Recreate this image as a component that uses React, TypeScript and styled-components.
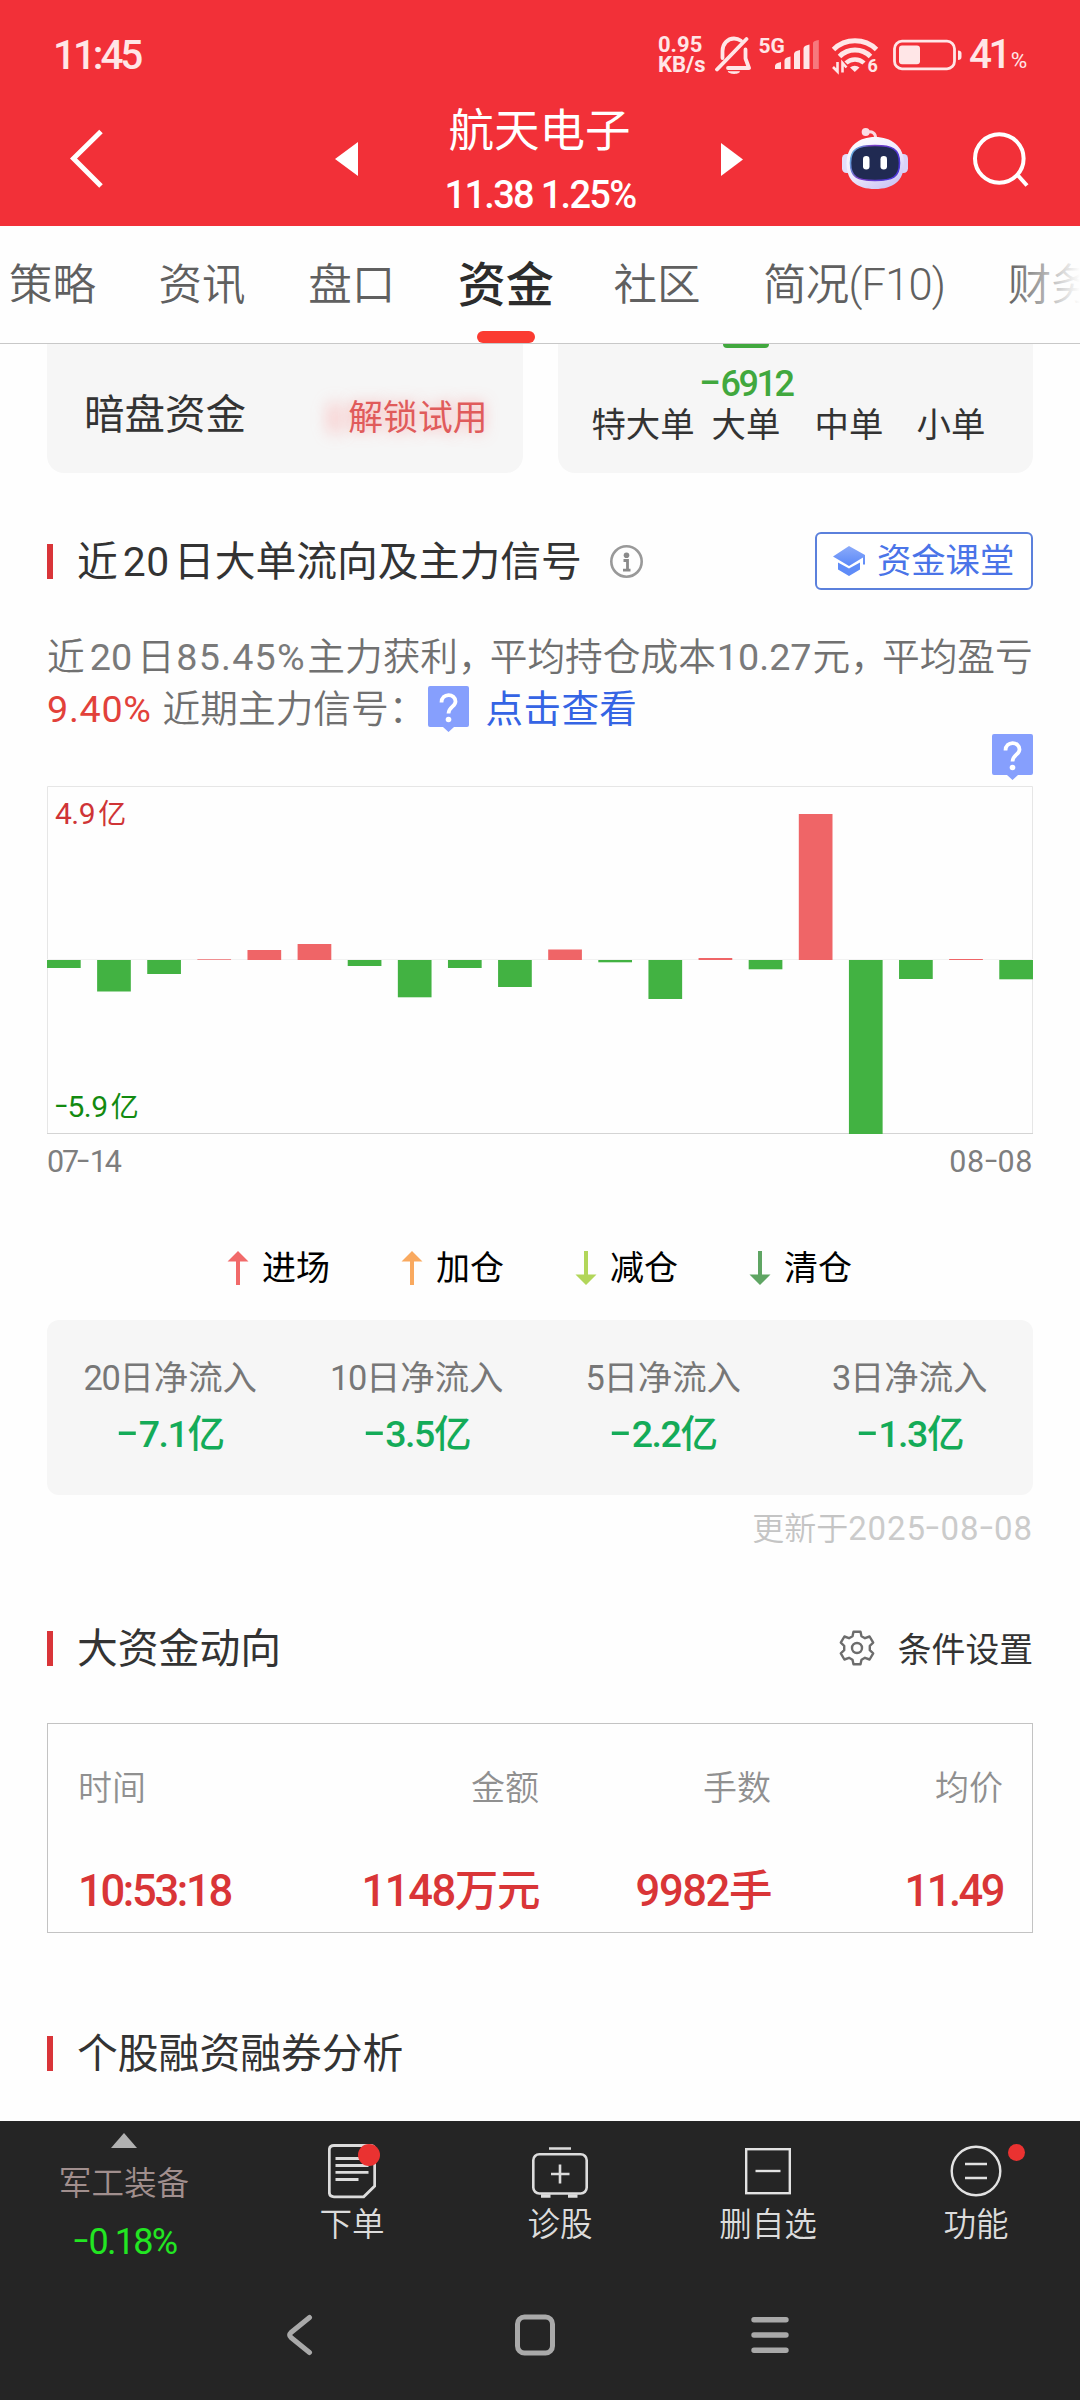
import React from 'react';
import styled, { createGlobalStyle } from 'styled-components';

const GlobalStyle = createGlobalStyle`
  *, *::before, *::after { box-sizing: border-box; }
  body {
    margin: 0;
    background: #fefefe;
    font-family: Roboto, "Noto Sans CJK SC", sans-serif;
    color: #333;
  }
  svg { display: block; flex: none; }
`;

const Page = styled.div`
  width: 1080px;
  height: 2400px;
  display: flex;
  flex-direction: column;
  overflow: hidden;
  white-space: nowrap;
`;

/* A long dash raised to the middle of the figures. */
const Dash = styled.span<{ $wide?: boolean }>`
  display: inline-block;
  margin: 0 ${p => (p.$wide ? 0.12 : 0.07)}em;
  letter-spacing: 0;
  transform: translateY(-0.065em) scaleX(${p => (p.$wide ? 1.75 : 1.45)});
`;

const Figures = ({ children, wide }: { children: string; wide?: boolean }) => (
  <>
    {children.split(/(-)/).map((part, i) =>
      part === '-' ? <Dash key={i} $wide={wide}>-</Dash> : part,
    )}
  </>
);

/* ---------- header ---------- */

const Header = styled.header`
  height: 226px;
  flex: none;
  background: #f23038;
  color: #fff;
`;

const StatusBar = styled.div`
  height: 101px;
  padding: 9px 53px 0 53px;
  display: flex;
  align-items: center;
  color: #ffe6e7;
`;

const Clock = styled.div`
  flex: 1;
  font-size: 40.5px;
  font-weight: 500;
  line-height: 46px;
  letter-spacing: -3.1px;
`;

const NetSpeed = styled.div`
  width: 48px;
  font-size: 22px;
  font-weight: 700;
  line-height: 20px;
`;

const StatusIcon = styled.div<{ $gap: number }>`
  margin-left: ${p => p.$gap}px;
`;

const BatteryText = styled.div`
  width: 58px;
  margin-left: 7px;
  padding-top: 3px;
  display: flex;
  align-items: baseline;
  font-size: 40.5px;
  font-weight: 500;
  line-height: 46px;
  letter-spacing: -3.6px;
  small {
    margin-left: 3px;
    font-size: 22.5px;
    font-weight: 400;
  }
`;

const TitleBar = styled.div`
  height: 125px;
  padding-left: 70px;
  display: flex;
  align-items: flex-start;
`;

const BarIcon = styled.div<{ $gap?: number }>`
  height: 116px;
  margin-left: ${p => p.$gap ?? 0}px;
  display: flex;
  align-items: center;
`;

const StockTitle = styled.div`
  width: 363px;
  padding-top: 3px;
  display: flex;
  flex-direction: column;
  align-items: center;
  gap: 15px;
`;

const StockName = styled.div`
  font-size: 45.5px;
  line-height: 56px;
`;

const StockQuote = styled.div`
  padding-left: 1px;
  font-size: 38px;
  font-weight: 500;
  line-height: 40px;
  letter-spacing: -1.7px;
`;

/* ---------- tabs ---------- */

const Tabs = styled.nav`
  height: 118px;
  flex: none;
  padding-left: 9px;
  display: flex;
  align-items: stretch;
  gap: 62.6px;
  border-bottom: 1px solid #c8c8c8;
  background: #fefefe;
  overflow: hidden;
  position: relative;
  &::after {
    content: '';
    position: absolute;
    right: 0;
    top: 0;
    width: 72px;
    height: 100%;
    background: linear-gradient(90deg, rgba(254, 254, 254, 0), #fefefe);
  }
`;

const Tab = styled.div<{ $active?: boolean }>`
  flex: none;
  margin-right: ${p => (p.$active ? -3 : 0)}px;
  display: flex;
  flex-direction: column;
  align-items: center;
  font-size: ${p => (p.$active ? 48 : 43.5)}px;
  font-weight: ${p => (p.$active ? 500 : 350)};
  color: ${p => (p.$active ? '#2c2c2c' : '#606060')};
  line-height: 119px;
  span { letter-spacing: -0.8px; }
  ${p =>
    p.$active &&
    `
    &::after {
      content: '';
      width: 58px;
      height: 12px;
      margin-top: -14px;
      border-radius: 6px;
      background: #fb3b31;
    }`}
`;

/* ---------- content ---------- */

const Main = styled.main`
  flex: 1;
  min-height: 0;
  padding: 0 47px;
  overflow: hidden;
`;

const CardRow = styled.div`
  display: grid;
  grid-template-columns: 1fr 1fr;
  grid-template-rows: 129px;
  gap: 35px;
`;

const Card = styled.div`
  background: #f6f6f6;
  border-radius: 0 0 17px 17px;
`;

const DarkPoolCard = styled(Card)`
  padding: 13px 35px 0 37px;
  display: flex;
  align-items: flex-start;
  justify-content: space-between;
`;

const DarkPoolLabel = styled.div`
  font-size: 40.5px;
  line-height: 116px;
`;

const Unlock = styled.div`
  position: relative;
  font-size: 34.8px;
  line-height: 122px;
  color: #e05b5b;
  text-shadow: 0 0 14px rgba(255, 110, 110, 0.55);
  &::before {
    content: '';
    position: absolute;
    left: -20px;
    top: 45px;
    width: 14px;
    height: 32px;
    border-radius: 7px;
    background: rgba(255, 130, 130, 0.36);
    filter: blur(8px);
  }
`;

const OrderCard = styled(Card)`
  padding-left: 34px;
  display: grid;
  grid-template-columns: 103px 103px 103px 101px;
  justify-items: center;
`;

const OrderColumn = styled.div`
  display: flex;
  flex-direction: column;
  align-items: center;
`;

const OrderBar = styled.div`
  width: 46px;
  height: 4px;
  border-radius: 0 0 6px 6px;
  background: #41a83e;
`;

const OrderValue = styled.div`
  height: 57px;
  font-size: 36px;
  font-weight: 500;
  line-height: 72px;
  letter-spacing: -2.5px;
  color: #41a83e;
`;

const OrderSpacer = styled.div`
  height: 61px;
`;

const OrderLabel = styled.div`
  font-size: 34.4px;
  line-height: 40px;
`;

const SectionHead = styled.div<{ $top: number }>`
  height: 60px;
  margin-top: ${p => p.$top}px;
  display: flex;
  align-items: center;
`;

const Mark = styled.div`
  width: 6px;
  height: 35px;
  margin-right: 24px;
  background: #d93539;
`;

const SectionTitle = styled.h2`
  margin: 0;
  padding-top: 1px;
  font-size: 40.8px;
  font-weight: 400;
  line-height: 60px;
  span {
    margin: 0 4px 0 5px;
    letter-spacing: 0.6px;
  }
`;

const InfoSlot = styled.div`
  margin-left: 28px;
  flex: 1;
`;

const ClassButton = styled.button`
  width: 218px;
  height: 58px;
  padding: 0 0 0 16px;
  display: flex;
  align-items: center;
  gap: 11px;
  border: 2px solid #5b80dc;
  border-radius: 6px;
  background: #fff;
  color: #4a74e8;
  font: 400 34.3px/54px Roboto, "Noto Sans CJK SC", sans-serif;
`;

const Summary = styled.div`
  margin-top: 41px;
  font-size: 37.7px;
  font-weight: 350;
  line-height: 51px;
  color: #707070;
`;

const Amount = styled.span<{ $side: number; $spacing?: number }>`
  margin: 0 ${p => p.$side}px;
  font-weight: 400;
  letter-spacing: ${p => p.$spacing ?? 0}px;
  color: #7a7a7a;
`;

const Comma = styled.span`
  letter-spacing: -6px;
`;

const SignalLine = styled.div`
  display: flex;
  align-items: center;
  height: 51px;
`;

const Profit = styled.span`
  margin-right: 11px;
  padding-top: 1px;
  font-weight: 400;
  letter-spacing: 0.7px;
  color: #e2413a;
`;

const SignalLabel = styled.span`
  width: 265px;
  padding-top: 1px;
`;

const ViewLink = styled.a`
  margin-left: 17px;
  padding-top: 1px;
  font-size: 37.5px;
  font-weight: 400;
  letter-spacing: 0.4px;
  color: #3564e4;
`;

const TagRow = styled.div`
  height: 52px;
  display: flex;
  justify-content: flex-end;
`;

const ChartFrame = styled.div`
  position: relative;
`;

const AxisLabel = styled.div<{ $low?: boolean }>`
  position: absolute;
  left: 8px;
  top: ${p => (p.$low ? 303 : 10)}px;
  font-size: 30px;
  line-height: 36px;
  letter-spacing: -0.5px;
  color: ${p => (p.$low ? '#128a10' : '#cf3436')};
  small {
    margin-left: 3px;
    font-size: 28px;
  }
`;

const DateRow = styled.div`
  margin-top: 10px;
  display: flex;
  justify-content: space-between;
  font-size: 30.5px;
  line-height: 36px;
  color: #7e7e7e;
`;

const DateLabel = styled.span<{ $spacing: number }>`
  letter-spacing: ${p => p.$spacing}px;
`;

const Legend = styled.div`
  height: 40px;
  margin-top: 68px;
  padding-left: 180px;
  display: grid;
  grid-template-columns: repeat(4, 174px);
`;

const LegendItem = styled.div`
  display: flex;
  align-items: center;
  gap: 13px;
  font-size: 34px;
  line-height: 40px;
  color: #000;
`;

const FlowCard = styled.div`
  height: 175px;
  margin-top: 32px;
  padding-top: 35px;
  display: grid;
  grid-template-columns: repeat(4, 1fr);
  background: #f6f6f6;
  border-radius: 12px;
  text-align: center;
`;

const FlowLabel = styled.div`
  font-size: 34.4px;
  line-height: 46px;
  color: #777;
  span { letter-spacing: -1.4px; }
`;

const FlowValue = styled.div`
  margin-top: 5px;
  font-size: 37.5px;
  font-weight: 500;
  line-height: 56px;
  letter-spacing: -1.4px;
  color: #14ab58;
`;

const Updated = styled.div`
  margin-top: 14px;
  font-size: 32px;
  font-weight: 350;
  line-height: 40px;
  text-align: right;
  color: #c4c4c4;
  span {
    font-size: 33px;
    font-weight: 400;
    letter-spacing: 0.9px;
    color: #cbcbcb;
  }
`;

const SettingLink = styled.div`
  margin-left: auto;
  display: flex;
  align-items: center;
  gap: 23px;
  padding-bottom: 1px;
  font-size: 33.8px;
`;

const Table = styled.div`
  height: 210px;
  margin-top: 45px;
  padding: 35px 29px 0 30px;
  border: 1px solid #c3c3c3;
`;

const TableRow = styled.div`
  display: grid;
  grid-template-columns: 230px 231px 232px 232px;
  > * { text-align: right; }
  > *:first-child { text-align: left; }
`;

const HeadCell = styled.div`
  font-size: 34px;
  font-weight: 350;
  line-height: 58px;
  color: #909090;
`;

const Cell = styled.div<{ $spacing?: number }>`
  margin-top: 45px;
  font-size: 43.5px;
  font-weight: 500;
  line-height: 60px;
  letter-spacing: ${p => p.$spacing ?? -1.4}px;
  color: #d93537;
`;

/* ---------- footer ---------- */

const Footer = styled.footer`
  height: 279px;
  flex: none;
  background: #252525;
`;

const Dock = styled.div`
  height: 154px;
  display: grid;
  grid-template-columns: 248px repeat(4, 208px);
`;

const Sector = styled.div`
  padding-top: 12px;
  display: flex;
  flex-direction: column;
  align-items: center;
`;

const SectorName = styled.div`
  margin-top: 13px;
  font-size: 32.6px;
  font-weight: 350;
  line-height: 46px;
  color: #a18f8e;
`;

const SectorChange = styled.div`
  margin-top: 13px;
  padding-left: 2px;
  font-size: 36px;
  line-height: 44px;
  letter-spacing: -1.7px;
  color: #22e622;
`;

const DockItem = styled.div`
  padding-top: 23px;
  display: flex;
  flex-direction: column;
  align-items: center;
  font-size: 32.6px;
  font-weight: 350;
  line-height: 52px;
  color: #dcdcdc;
`;

const DockIcon = styled.div`
  position: relative;
  height: 55px;
`;

const Dot = styled.i<{ $size: number; $left: number; $top: number }>`
  position: absolute;
  left: ${p => p.$left}px;
  top: ${p => p.$top}px;
  width: ${p => p.$size}px;
  height: ${p => p.$size}px;
  border-radius: 50%;
  background: #ea3231;
`;

const SystemNav = styled.div`
  padding: 38px 0 0 285px;
  display: flex;
  gap: 196px;
`;

/* ---------- icons ---------- */

const BellOff = () => (
  <svg width="36" height="40" viewBox="714 35 36 40" fill="none" stroke="#ffe6e7" strokeWidth="3.8" strokeLinecap="round" strokeLinejoin="round">
    <path d="M721.5 58V51c0-7 5-12.5 11.500-12.500 2.800 0 5 .8 7 2.200" />
    <path d="M716 69.500L745.500 39" />
    <path d="M744.500 49.500V58.500L748 68H727" />
    <path d="M727.500 71.800h11c-1.500 2.200-9.500 2.200-11 0z" fill="#ffe6e7" strokeWidth="1" />
  </svg>
);

const SvgLabel = styled.text`
  font-family: Roboto, sans-serif;
  font-weight: 700;
  fill: #ffe6e7;
`;

const Signal = () => (
  <svg width="61" height="40" viewBox="757 35 61 40" fill="#ffe6e7">
    <SvgLabel x="757.500" y="52.500" fontSize="21">5G</SvgLabel>
    <path d="M774 66q0-3 6-4v7h-6zM783.500 60.500q0-3 6-4v12.500h-6zM793 54q0-3 6-4v19h-6zM802.500 48.500q0-3 6-4v24.500h-6z" />
    <path d="M812 43q0-2 5.800-3v29H812z" opacity="0.4" />
  </svg>
);

const Wifi = () => (
  <svg width="50" height="44" viewBox="830 33 50 44" fill="none" stroke="#ffe6e7">
    <path d="M832.500 49.500a31 31 0 0 1 43 0" strokeWidth="5" />
    <path d="M838.500 56.500a22 22 0 0 1 31 0" strokeWidth="5" />
    <path d="M845 63a13 13 0 0 1 18 0" strokeWidth="4.500" />
    <path d="M849 67.500a7 7 0 0 1 9.500 0l-4.700 4.500z" fill="#ffe6e7" stroke="none" />
    <path d="M836.500 62v9.500l-4.500-4.500M841.500 72.500v-9.500l4 4.500" strokeWidth="2.600" />
    <SvgLabel x="866.500" y="72" fontSize="18" stroke="none">6</SvgLabel>
  </svg>
);

const Battery = () => (
  <svg width="69" height="32" viewBox="892 38 69 32" fill="none">
    <rect x="893.500" y="40.200" width="60" height="27.600" rx="7.500" stroke="#ffe6e7" strokeWidth="2.800" />
    <rect x="898" y="44.500" width="21" height="18.800" rx="3" fill="#ffe6e7" />
    <path d="M957 49.500q3.500 0 3.500 3v3.500q0 3-3.500 3z" fill="#ffe6e7" />
  </svg>
);

const Robot = () => (
  <svg width="66" height="64" viewBox="842 126 66 64">
    <defs>
      <linearGradient id="shell" x1="0" y1="0" x2="0.600" y2="1">
        <stop offset="0" stopColor="#ffffff" />
        <stop offset="0.600" stopColor="#efeafd" />
        <stop offset="1" stopColor="#cfc9f5" />
      </linearGradient>
      <linearGradient id="rim" x1="0" y1="0" x2="1" y2="0.300">
        <stop offset="0" stopColor="#5fc9e8" />
        <stop offset="0.400" stopColor="#7a3fc4" />
        <stop offset="1" stopColor="#4c36d8" />
      </linearGradient>
    </defs>
    <path d="M866 131.500c6-2 10 .5 9.500 6" fill="none" stroke="#fbd9e2" strokeWidth="3" />
    <circle cx="865.700" cy="131" r="4" fill="#fbdde5" />
    <rect x="842" y="153" width="10" height="19" rx="4.500" fill="#e3defb" />
    <rect x="898" y="153" width="10" height="19" rx="4.500" fill="#d9d3f8" />
    <path d="M875 136c16 0 29 9 29 26.500S893 188 875 188s-28.500-8-28.500-25.500S859 136 875 136z" fill="url(#shell)" />
    <path d="M875 144.500c17 0 24.500 3 24.500 17.500s-7 17.500-24.500 17.500-24.500-3-24.500-17.500 7.500-17.500 24.500-17.500z" fill="#202a52" stroke="url(#rim)" strokeWidth="1.600" />
    <rect x="863" y="155" width="6.500" height="13.500" rx="3.200" fill="#fff" />
    <rect x="880.500" y="155" width="6.500" height="13.500" rx="3.200" fill="#fff" />
  </svg>
);

const Search = () => (
  <svg width="57" height="58" viewBox="972 130 57 58" fill="none" stroke="#fff" strokeWidth="4">
    <circle cx="999.300" cy="158.500" r="24.300" />
    <path d="M1018 175.500L1027 185.500" />
  </svg>
);

const Info = () => (
  <svg width="33" height="33" viewBox="0 0 33 33" fill="none" stroke="#999">
    <circle cx="16.500" cy="16.500" r="15.200" strokeWidth="2.600" />
    <circle cx="16.500" cy="10.300" r="2.800" fill="#8a8a8a" stroke="none" />
    <path d="M13.500 15.500h4v9.500M13 25.200h7.500" stroke="#8a8a8a" strokeWidth="2.800" />
  </svg>
);

const GradCap = () => (
  <svg width="33" height="30" viewBox="0 0 33 30">
    <defs>
      <linearGradient id="cap" x1="0" y1="0" x2="0" y2="1">
        <stop offset="0" stopColor="#8cabfa" />
        <stop offset="1" stopColor="#5a88f8" />
      </linearGradient>
    </defs>
    <path d="M16 0L32 9V18.500H30V11.500L16 20 0 10.500z" fill="url(#cap)" />
    <path d="M5 16.500L16 22.500 27 16.500V23.500L16 30 5 23.500z" fill="#5f8cf8" />
  </svg>
);

const QuestionTag = () => (
  <svg width="41" height="46" viewBox="0 0 41 46">
    <path d="M2 0H39Q41 0 41 2V39Q41 41 39 41H26L20.500 46 15 41H2Q0 41 0 39V2Q0 0 2 0z" fill="#869ffd" />
    <path d="M13.500 16.500C13.500 6.500 27.500 7 27.500 15.500C27.500 20.500 20.500 21 20.500 27.500" fill="none" stroke="#fff" strokeWidth="3.800" />
    <circle cx="20.500" cy="33.500" r="2.800" fill="#fff" />
  </svg>
);

const Gear = () => (
  <svg width="36" height="36" viewBox="-18 -18 36 36" fill="none" stroke="#6c6c6c" strokeWidth="2.400" strokeLinejoin="round">
    <path d="M-3.500 -16.300H3.500L4.500 -11.800 8 -9.800 12.600 -11.500 16.200 -5.300 12.800 -2.200V2.200L16.200 5.300 12.600 11.500 8 9.800 4.500 11.800 3.500 16.300H-3.500L-4.500 11.800 -8 9.800 -12.600 11.500 -16.200 5.300 -12.800 2.200V-2.200L-16.200 -5.300 -12.600 -11.500 -8 -9.800 -4.500 -11.800z" />
    <circle r="5" />
  </svg>
);

const Arrow = ({ color, down }: { color: string; down?: boolean }) => (
  <svg width="22" height="34" viewBox="0 0 22 34">
    <path
      d="M11 0L21.500 10.500H13V34H9V10.500H.5z"
      fill={color}
      transform={down ? 'rotate(180 11 17)' : undefined}
    />
  </svg>
);

const OrderIcon = () => (
  <svg width="48" height="55" viewBox="328 2144 48 55" fill="none" stroke="#dcdcdc" strokeWidth="2.800">
    <path d="M334 2145.500h36q4.700 0 4.700 4.500v36l-11 10.800H334q-4.700 0-4.700-4.700v-42q0-4.600 4.700-4.600z" />
    <path d="M335.500 2158.500h32M335.500 2165.500h33M335.500 2172.300h33M335.500 2179.500h23" />
  </svg>
);

const DiagnoseIcon = () => (
  <svg width="56" height="55" viewBox="532 2144 56 55" fill="none" stroke="#dcdcdc" strokeWidth="2.600">
    <rect x="533.300" y="2154.200" width="53.400" height="39.300" rx="6" />
    <path d="M549 2148.500h22M551 2174h18.500M560 2164.500v19" />
    <path d="M541 2196h9.500M568 2196h9.500" strokeWidth="3.400" />
  </svg>
);

const RemoveIcon = () => (
  <svg width="46" height="55" viewBox="745 2144 46 55" fill="none" stroke="#e2e2e2" strokeWidth="2.400">
    <rect x="746.200" y="2149.200" width="43.600" height="44" />
    <path d="M755.500 2171h25" />
  </svg>
);

const FunctionIcon = () => (
  <svg width="52" height="55" viewBox="950 2144 52 55" fill="none" stroke="#e2e2e2" strokeWidth="2.400">
    <circle cx="976" cy="2171" r="24.300" />
    <path d="M965 2164h22M965 2178h22" strokeWidth="2.600" />
  </svg>
);

/* ---------- chart ---------- */

const ZERO = 174;
const flows = [-8, -31.5, -14, 0.7, 10, 16, -6, -37.3, -8, -27, 10.5, -2.3, -39, 2, -9.3, 146, -174, -19, 1, -19.3];

const FlowChart = () => (
  <ChartFrame>
    <svg width="986" height="348" viewBox="0 0 986 348">
      <path d="M.5 347V.5H985.500V347" fill="none" stroke="#e6e6e6" />
      <path d="M0 347.500H986" stroke="#d4d4d4" />
      <path d={`M0 ${ZERO - 0.5}H986`} stroke="#f2f2f2" />
      {flows.map((v, i) => (
        <rect
          key={i}
          x={i * 50.12}
          y={v > 0 ? ZERO - v : ZERO}
          width={33.7}
          height={Math.abs(v)}
          fill={v > 0 ? '#ef6567' : '#42b242'}
        />
      ))}
    </svg>
    <AxisLabel>4.9<small>亿</small></AxisLabel>
    <AxisLabel $low><Figures>-5.9</Figures><small>亿</small></AxisLabel>
  </ChartFrame>
);

/* ---------- data ---------- */

const tabs = ['策略', '资讯', '盘口', '资金', '社区'];

const legend = [
  { label: '进场', color: '#f16a6a' },
  { label: '加仓', color: '#f9a95f' },
  { label: '减仓', color: '#b2d65a', down: true },
  { label: '清仓', color: '#5fa563', down: true },
];

const netFlows = [
  { days: '20', value: '-7.1亿' },
  { days: '10', value: '-3.5亿' },
  { days: '5', value: '-2.2亿' },
  { days: '3', value: '-1.3亿' },
];

export default function App() {
  return (
    <Page lang="zh-CN">
      <GlobalStyle />
      <Header>
        <StatusBar>
          <Clock>11:45</Clock>
          <NetSpeed>
            <div>0.95</div>
            <div>KB/s</div>
          </NetSpeed>
          <StatusIcon $gap={9}><BellOff /></StatusIcon>
          <StatusIcon $gap={7}><Signal /></StatusIcon>
          <StatusIcon $gap={12}><Wifi /></StatusIcon>
          <StatusIcon $gap={12}><Battery /></StatusIcon>
          <BatteryText>41<small>%</small></BatteryText>
        </StatusBar>
        <TitleBar>
          <BarIcon>
            <svg width="34" height="60" viewBox="0 0 34 60" fill="none" stroke="#fff" strokeWidth="5">
              <path d="M31 2.500L3.500 29.500 31 57" />
            </svg>
          </BarIcon>
          <BarIcon $gap={231}>
            <svg width="23" height="34" viewBox="0 0 23 34"><path d="M23 0V34L0 17z" fill="#fff" /></svg>
          </BarIcon>
          <StockTitle>
            <StockName>航天电子</StockName>
            <StockQuote>11.38 1.25%</StockQuote>
          </StockTitle>
          <BarIcon>
            <svg width="22" height="33" viewBox="0 0 22 33"><path d="M0 0V33L22 16.500z" fill="#fff" /></svg>
          </BarIcon>
          <BarIcon $gap={99}><Robot /></BarIcon>
          <BarIcon $gap={64}><Search /></BarIcon>
        </TitleBar>
      </Header>

      <Tabs>
        {tabs.map(t => (
          <Tab key={t} $active={t === '资金'}>{t}</Tab>
        ))}
        <Tab><span>简况(F10)</span></Tab>
        <Tab>财务</Tab>
      </Tabs>

      <Main>
        <CardRow>
          <DarkPoolCard>
            <DarkPoolLabel>暗盘资金</DarkPoolLabel>
            <Unlock>解锁试用</Unlock>
          </DarkPoolCard>
          <OrderCard>
            <OrderColumn><OrderSpacer /><OrderLabel>特大单</OrderLabel></OrderColumn>
            <OrderColumn>
              <OrderBar />
              <OrderValue><Figures wide>-6912</Figures></OrderValue>
              <OrderLabel>大单</OrderLabel>
            </OrderColumn>
            <OrderColumn><OrderSpacer /><OrderLabel>中单</OrderLabel></OrderColumn>
            <OrderColumn><OrderSpacer /><OrderLabel>小单</OrderLabel></OrderColumn>
          </OrderCard>
        </CardRow>

        <SectionHead $top={58}>
          <Mark />
          <SectionTitle>近<span>20</span>日大单流向及主力信号</SectionTitle>
          <InfoSlot><Info /></InfoSlot>
          <ClassButton><GradCap />资金课堂</ClassButton>
        </SectionHead>

        <Summary>
          <div>
            近<Amount $side={5}>20</Amount>日
            <Amount $side={1.5} $spacing={1.2}>85.45%</Amount>主力获利<Comma>，</Comma>平均持仓成本
            <Amount $side={1}>10.27</Amount>元<Comma>，</Comma>平均盈亏
          </div>
          <SignalLine>
            <Profit>9.40%</Profit>
            <SignalLabel>近期主力信号：</SignalLabel>
            <QuestionTag />
            <ViewLink>点击查看</ViewLink>
          </SignalLine>
        </Summary>

        <TagRow><QuestionTag /></TagRow>
        <FlowChart />
        <DateRow>
          <DateLabel $spacing={-2.1}><Figures>07-14</Figures></DateLabel>
          <DateLabel $spacing={0.6}><Figures>08-08</Figures></DateLabel>
        </DateRow>

        <Legend>
          {legend.map(l => (
            <LegendItem key={l.label}>
              <Arrow color={l.color} down={l.down} />
              {l.label}
            </LegendItem>
          ))}
        </Legend>

        <FlowCard>
          {netFlows.map(f => (
            <div key={f.days}>
              <FlowLabel><span>{f.days}</span>日净流入</FlowLabel>
              <FlowValue><Figures wide>{f.value}</Figures></FlowValue>
            </div>
          ))}
        </FlowCard>
        <Updated>更新于<span><Figures>2025-08-08</Figures></span></Updated>

        <SectionHead $top={69}>
          <Mark />
          <SectionTitle>大资金动向</SectionTitle>
          <SettingLink><Gear />条件设置</SettingLink>
        </SectionHead>
        <Table>
          <TableRow>
            <HeadCell>时间</HeadCell>
            <HeadCell>金额</HeadCell>
            <HeadCell>手数</HeadCell>
            <HeadCell>均价</HeadCell>
          </TableRow>
          <TableRow>
            <Cell $spacing={-2.3}>10:53:18</Cell>
            <Cell>1148万元</Cell>
            <Cell>9982手</Cell>
            <Cell $spacing={-2.5}>11.49</Cell>
          </TableRow>
        </Table>

        <SectionHead $top={90}>
          <Mark />
          <SectionTitle>个股融资融券分析</SectionTitle>
        </SectionHead>
      </Main>

      <Footer>
        <Dock>
          <Sector>
            <svg width="26" height="15" viewBox="0 0 26 15"><path d="M13 0L26 15H0z" fill="#b1b1b1" /></svg>
            <SectorName>军工装备</SectorName>
            <SectorChange><Figures>-0.18%</Figures></SectorChange>
          </Sector>
          <DockItem>
            <DockIcon><OrderIcon /><Dot $size={22} $left={30} $top={0} /></DockIcon>
            下单
          </DockItem>
          <DockItem><DockIcon><DiagnoseIcon /></DockIcon>诊股</DockItem>
          <DockItem><DockIcon><RemoveIcon /></DockIcon>删自选</DockItem>
          <DockItem>
            <DockIcon><FunctionIcon /><Dot $size={17} $left={58} $top={0} /></DockIcon>
            功能
          </DockItem>
        </Dock>
        <SystemNav>
          <svg width="32" height="44" viewBox="285 2313 32 44" fill="none" stroke="#a9a9a9" strokeWidth="5" strokeLinecap="round" strokeLinejoin="round">
            <path d="M309.500 2317.500L291 2332.500q-2.500 2.500 0 5L309.500 2352.500" />
          </svg>
          <svg width="42" height="44" viewBox="513 2313 42 44" fill="none" stroke="#a9a9a9" strokeWidth="5">
            <rect x="517.500" y="2317" width="35" height="36" rx="7" />
          </svg>
          <svg width="38" height="44" viewBox="751 2313 38 44" stroke="#a9a9a9" strokeWidth="5.400" strokeLinecap="round">
            <path d="M754 2319.700h32M754 2335h32M754 2350.300h32" />
          </svg>
        </SystemNav>
      </Footer>
    </Page>
  );
}
